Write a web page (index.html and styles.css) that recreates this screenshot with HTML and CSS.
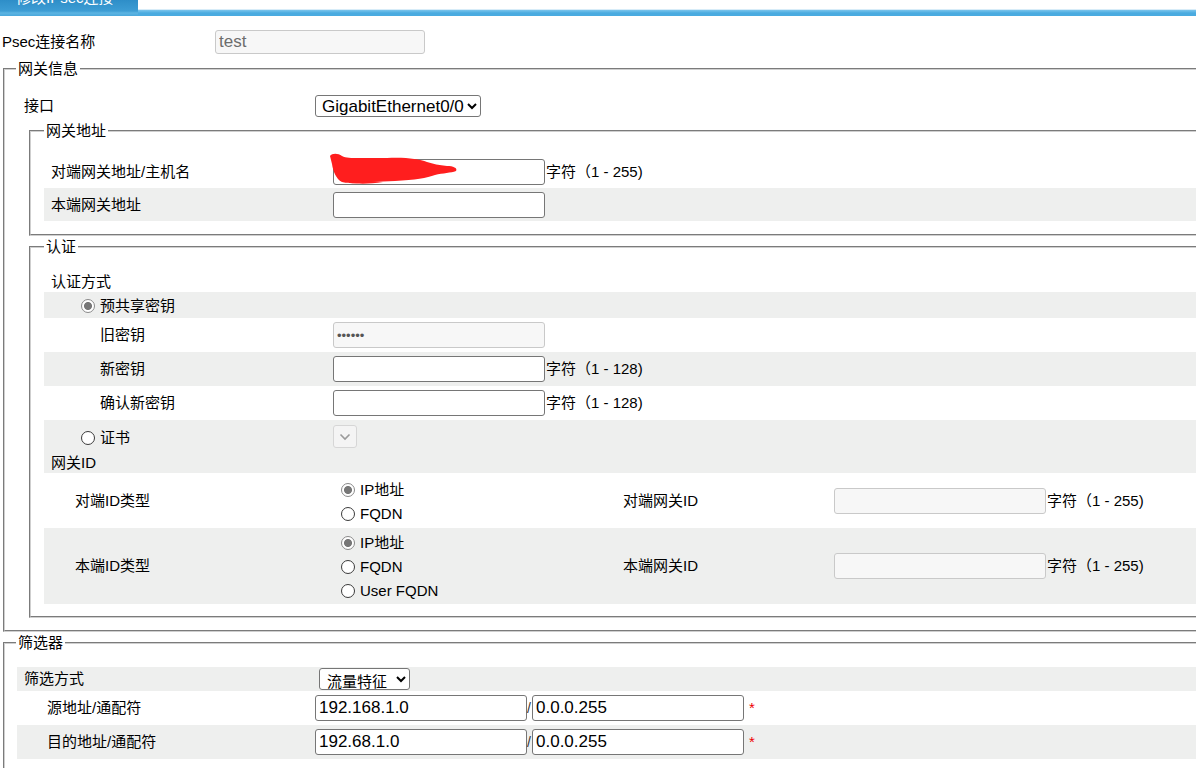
FILE: index.html
```html
<!DOCTYPE html>
<html lang="zh-CN">
<head>
<meta charset="utf-8">
<title>修改IPsec连接</title>
<link rel="stylesheet" href="styles.css">
</head>
<body>
<div class="topbar">
  <div class="tab"><span>修改IPsec连接</span></div>
  <div class="tabline"></div>
</div>

<div class="namerow">
  <span class="lbl">Psec连接名称</span>
  <input class="inp dis name" value="test" disabled>
</div>

<fieldset class="fs outer">
  <legend>网关信息</legend>
  <div class="iface">
    <span class="lbl">接口</span>
    <select class="sel"><option>GigabitEthernet0/0</option></select>
  </div>

  <fieldset class="fs inner first">
    <legend>网关地址</legend>
    <div class="row h33">
      <span class="l">对端网关地址/主机名</span>
      <div class="f">
        <span class="redwrap">
          <input class="inp">
          <svg class="redact" width="130" height="32" viewBox="0 0 130 32"><path d="M1,3 C3,0 9,0 13,3 C17,5 22,5 30,5 L58,5 C76,4 90,6 98,9 C104,11 110,12 118,13 C124,13 129,15 127,18 C122,20 114,20 106,22 C98,25 86,27 66,28 L42,29 C30,30 20,31 13,29 C7,26 4,18 3,11 Z" fill="#ff1e1e"/><path d="M22,28 C34,28 46,28 54,29 C42,31 30,31 22,30 Z" fill="#ff1e1e"/></svg>
        </span>
        <span class="suf">字符（1 - 255)</span>
      </div>
    </div>
    <div class="row h33 gray">
      <span class="l">本端网关地址</span>
      <div class="f"><input class="inp"></div>
    </div>
  </fieldset>

  <fieldset class="fs inner auth">
    <legend>认证</legend>
    <div class="row h20"><span class="l">认证方式</span></div>
    <div class="row h26 gray">
      <label class="rad ind1"><input type="radio" name="m" checked disabled><span>预共享密钥</span></label>
    </div>
    <div class="row h34">
      <span class="l ind2">旧密钥</span>
      <div class="f"><input class="inp dis pw" value="••••••" disabled></div>
    </div>
    <div class="row h34 gray">
      <span class="l ind2">新密钥</span>
      <div class="f"><input class="inp"><span class="suf">字符（1 - 128)</span></div>
    </div>
    <div class="row h34">
      <span class="l ind2">确认新密钥</span>
      <div class="f"><input class="inp"><span class="suf">字符（1 - 128)</span></div>
    </div>
    <div class="row h33 gray">
      <label class="rad ind1"><input type="radio" name="m"><span>证书</span></label>
      <div class="f"><span class="minisel"><svg width="12" height="8" viewBox="0 0 12 8"><path d="M1.5,1.5 L6,6 L10.5,1.5" fill="none" stroke="#9a9a9a" stroke-width="1.6"/></svg></span></div>
    </div>
    <div class="row h20 gray"><span class="l">网关ID</span></div>
    <div class="idrow h55">
      <span class="il">对端ID类型</span>
      <div class="radios">
        <label class="rad"><input type="radio" name="p" checked disabled><span>IP地址</span></label>
        <label class="rad"><input type="radio" name="p"><span>FQDN</span></label>
      </div>
      <span class="il2">对端网关ID</span>
      <div class="f"><input class="inp dis" disabled><span class="suf">字符（1 - 255)</span></div>
    </div>
    <div class="idrow h76 gray">
      <span class="il">本端ID类型</span>
      <div class="radios">
        <label class="rad"><input type="radio" name="q" checked disabled><span>IP地址</span></label>
        <label class="rad"><input type="radio" name="q"><span>FQDN</span></label>
        <label class="rad"><input type="radio" name="q"><span>User FQDN</span></label>
      </div>
      <span class="il2">本端网关ID</span>
      <div class="f"><input class="inp dis" disabled><span class="suf">字符（1 - 255)</span></div>
    </div>
  </fieldset>
</fieldset>

<fieldset class="fs outer filter">
  <legend>筛选器</legend>
  <div class="frow h24 gray">
    <span class="l">筛选方式</span>
    <div class="f"><select class="sel cjk"><option>流量特征</option></select></div>
  </div>
  <div class="frow h34">
    <span class="l ind3">源地址/通配符</span>
    <div class="f"><input class="inp" value="192.168.1.0"><span class="slash">/</span><input class="inp" value="0.0.0.255"><span class="req">*</span></div>
  </div>
  <div class="frow h34 gray">
    <span class="l ind3">目的地址/通配符</span>
    <div class="f"><input class="inp" value="192.68.1.0"><span class="slash">/</span><input class="inp" value="0.0.0.255"><span class="req">*</span></div>
  </div>
</fieldset>
</body>
</html>
```

FILE: styles.css
```css
html {
  overflow: hidden;
  background: #fff;
}
body {
  margin: 0;
  width: 1240px;
  font-family: "Liberation Sans", "Noto Sans CJK SC", sans-serif;
  font-size: 15px;
  line-height: 20px;
  color: #000;
}

/* top tab bar */
.topbar {
  display: flex;
  height: 16px;
  overflow: hidden;
}
.tab {
  width: 138px;
  height: 16px;
  background: linear-gradient(#2e8ec8 0, #3d9dd4 11px, #5cb4e2 13px, #4aa8dc 16px);
  color: #fff;
  overflow: hidden;
}
.tab span {
  display: block;
  margin-top: -12px;
  padding-left: 16px;
  line-height: 20px;
  font-size: 15px;
}
.tabline {
  flex: 1;
  margin-top: 9px;
  height: 7px;
  background: linear-gradient(#d7ecf8 0, #d7ecf8 1px, #7cc5ec 1px, #4aabe0 4px, #4aabe0 7px);
}

/* inputs */
.inp {
  box-sizing: border-box;
  width: 212px;
  height: 26px;
  margin: 0;
  padding: 1px 3px;
  border: 1px solid #767676;
  border-radius: 3px;
  background: #fff;
  font-family: "Liberation Sans", sans-serif;
  font-size: 17px;
  color: #000;
}
.inp.dis {
  background: #f7f7f7;
  border-color: #c9c9c9;
  color: #6d6d6d;
}
.inp.name {
  width: 210px;
  height: 24px;
}
.inp.pw {
  font-size: 13px;
  color: #555;
}
.sel {
  box-sizing: border-box;
  height: 22px;
  margin: 0;
  padding: 0 0 0 2px;
  border: 1px solid #767676;
  border-radius: 3px;
  background: #fff;
  font-family: "Liberation Sans", sans-serif;
  font-size: 17px;
  color: #000;
}
.sel.cjk {
  font-family: "Noto Sans CJK SC", sans-serif;
  font-size: 15px;
  line-height: normal;
  padding: 0 0 0 3px;
  margin-left: 4px;
  width: 91px;
}
.minisel {
  box-sizing: border-box;
  display: inline-flex;
  align-items: center;
  justify-content: center;
  width: 24px;
  height: 23px;
  border: 1px solid #d6d6d6;
  border-radius: 3px;
  background: #f4f4f4;
}
.suf {
  margin-left: 1px;
}

/* name row */
.namerow {
  display: grid;
  grid-template-columns: 215px 210px;
  align-items: center;
  height: 24px;
  margin-top: 14px;
}
.namerow .lbl {
  padding-left: 2px;
}

/* fieldsets */
.fs {
  min-width: 0;
  margin: 0;
  padding: 0;
  border: 2px groove #cfcfcf;
}
.fs legend {
  margin-left: 11px;
  padding: 0 2px;
  line-height: 20px;
  font-size: 15px;
}
.outer {
  margin: 5px 0 0 3px;
  padding-bottom: 12px;
}
.outer.filter {
  margin-top: 1px;
  padding-top: 14px;
  padding-bottom: 20px;
}
.inner {
  margin-left: 24px;
}
.inner legend {
  margin-left: 13px;
}
.inner.first {
  padding: 14px 0 13px 0;
}
.inner.auth {
  margin-top: 1px;
  padding: 15px 0 12px 0;
}

.iface {
  display: grid;
  grid-template-columns: 310px auto;
  justify-content: start;
  align-items: center;
  height: 30px;
  margin-top: 12px;
}
.iface .lbl {
  padding-left: 19px;
}

/* rows */
.row {
  display: grid;
  grid-template-columns: 289px 1fr;
  align-items: center;
  margin-left: 13px;
}
.row .l {
  padding-left: 7px;
}
.row .l.ind2 {
  padding-left: 56px;
}
.gray {
  background: #eeefee;
}
.h20 { height: 20px; }
.h24 { height: 24px; }
.h26 { height: 26px; }
.h33 { height: 33px; }
.h34 { height: 34px; }
.h55 { height: 55px; }
.h76 { height: 76px; }

.f {
  display: flex;
  align-items: center;
}

.rad {
  display: flex;
  align-items: center;
  gap: 5px;
}
.rad input {
  appearance: none;
  -webkit-appearance: none;
  box-sizing: border-box;
  width: 14px;
  height: 14px;
  margin: 0;
  border: 1px solid #3b3b3b;
  border-radius: 50%;
  background: #fff;
}
.rad input:checked {
  border-color: #8a8a8a;
  background: radial-gradient(circle, #777 0, #777 3.6px, #fff 4.4px);
}
.rad.ind1 {
  padding-left: 37px;
  padding-top: 2px;
}

.redwrap {
  position: relative;
  display: inline-block;
  height: 26px;
}
.redact {
  position: absolute;
  left: -4px;
  top: -6px;
}

/* gateway id rows */
.idrow {
  display: grid;
  grid-template-columns: 296px 283px 211px 1fr;
  align-items: center;
  margin-left: 13px;
}
.il {
  padding-left: 31px;
}
.radios {
  display: flex;
  flex-direction: column;
  gap: 4px;
  padding-left: 1px;
}
.idrow.h55 .radios {
  padding-top: 3px;
}
.idrow.h76 .radios {
  padding-top: 2px;
}

/* filter rows */
.frow {
  display: grid;
  grid-template-columns: 298px 1fr;
  align-items: center;
  margin-left: 12px;
}
.frow .l {
  padding-left: 7px;
}
.frow .l.ind3 {
  padding-left: 30px;
}
.slash {
  width: 5px;
  color: #333;
  font-size: 14px;
}
.req {
  color: #e00;
  margin-left: 5px;
  font-size: 15px;
  align-self: flex-start;
  margin-top: 3px;
}
```
